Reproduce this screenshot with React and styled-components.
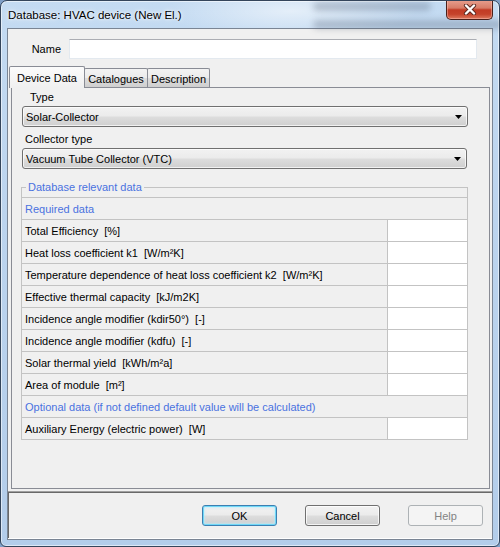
import React from 'react';
import styled, { createGlobalStyle } from 'styled-components';

const GlobalStyle = createGlobalStyle`
  html, body {
    margin: 0;
    padding: 0;
    background: #7f9fc7;
  }
  * {
    box-sizing: border-box;
  }
`;

const uiFont = `"Liberation Sans", Arial, sans-serif`;

const Window = styled.div`
  position: relative;
  width: 500px;
  height: 547px;
  display: flex;
  flex-direction: column;
  border: 1px solid #34455b;
  border-radius: 7px 7px 6px 6px;
  overflow: hidden;
  background:
    radial-gradient(ellipse 180px 40px at 290px 10px, rgba(255, 255, 255, 0.55), rgba(255, 255, 255, 0) 70%),
    linear-gradient(180deg, #c4dbf2 0%, #bcd4ee 40%, #b3cdea 100%);
  box-shadow: inset 0 0 0 1px rgba(255, 255, 255, 0.55);
  font-family: ${uiFont};
  font-size: 11px;
  color: #000;
`;

const TitleBar = styled.div`
  position: relative;
  height: 27px;
  display: flex;
  align-items: center;
  padding-left: 7px;
`;

const Smudge = styled.div`
  position: absolute;
  height: 9px;
  border-radius: 5px;
  background: rgba(70, 80, 100, 0.28);
  filter: blur(3px);
`;

const Title = styled.span`
  position: relative;
  font-family: ${uiFont};
  font-size: 11.5px;
  color: #000;
  text-shadow: 0 0 6px rgba(255, 255, 255, 0.9), 0 0 3px rgba(255, 255, 255, 0.9);
`;

const CloseButton = styled.div`
  position: absolute;
  top: -1px;
  right: 6px;
  width: 47px;
  height: 20px;
  display: flex;
  align-items: center;
  justify-content: center;
  border: 1px solid #4a201a;
  border-top: none;
  border-radius: 0 0 5px 5px;
  background: linear-gradient(180deg, #e8a08f 0%, #d77c67 42%, #c23b25 52%, #c5432b 75%, #de7a5f 100%);
  box-shadow: inset 0 0 0 1px rgba(255, 200, 190, 0.45);
`;

const Client = styled.div`
  flex: 1;
  margin: 0 6px 6px 6px;
  display: flex;
  flex-direction: column;
  background: #f0f0f0;
  border: 1px solid #7a8594;
`;

const MainSection = styled.div`
  flex: 1;
  display: flex;
  flex-direction: column;
`;

const NameRow = styled.div`
  display: flex;
  align-items: center;
  padding-top: 10px;
`;

const NameLabel = styled.span`
  width: 53px;
  text-align: right;
  margin-right: 8px;
`;

const TextBox = styled.div`
  width: 408px;
  height: 20px;
  background: #fff;
  border: 1px solid #e3e9ef;
  border-top-color: #abadb3;
`;

const TabStrip = styled.div`
  display: flex;
  align-items: flex-end;
  height: 22px;
  margin-top: 7px;
  margin-bottom: -1px;
  padding-left: 1px;
  position: relative;
  z-index: 1;
`;

const Tab = styled.div`
  display: flex;
  align-items: center;
  justify-content: center;
  width: ${(p) => p.$width}px;
  margin-left: ${(p) => (p.$active ? 0 : -1)}px;
  height: ${(p) => (p.$active ? 22 : 19)}px;
  margin-bottom: ${(p) => (p.$active ? 0 : 1)}px;
  border: 1px solid #898c95;
  border-bottom: none;
  border-radius: 2px 2px 0 0;
  padding-top: ${(p) => (p.$active ? 0 : 1)}px;
  z-index: ${(p) => (p.$active ? 2 : 1)};
  background: ${(p) =>
    p.$active
      ? 'linear-gradient(180deg, #fbfbfb 0%, #f0f0f0 100%)'
      : 'linear-gradient(180deg, #f3f3f3 0%, #ebebeb 50%, #dddddd 51%, #cfcfcf 100%)'};
`;

const TabPanel = styled.div`
  flex: 1;
  margin: 0 2px 2px 3px;
  border: 1px solid #898c95;
  background: #f0f0f0;
  display: flex;
  flex-direction: column;
`;

const FieldLabel = styled.div`
  height: 13px;
  line-height: 13px;
  margin-top: ${(p) => p.$top}px;
  padding-left: ${(p) => p.$indent}px;
`;

const ComboBox = styled.div`
  display: flex;
  align-items: center;
  justify-content: space-between;
  width: ${(p) => p.$width}px;
  height: 21px;
  margin: 2px 0 0 10px;
  padding: 0 5px 0 3px;
  border: 1px solid #707070;
  border-radius: 3px;
  background: linear-gradient(180deg, #f2f2f2 0%, #ebebeb 48%, #dddddd 52%, #cfcfcf 100%);
  box-shadow: inset 0 0 0 1px rgba(255, 255, 255, 0.7);
`;

const GroupBox = styled.div`
  display: flex;
  flex-direction: column;
  width: 447px;
  margin: 18px 0 0 9px;
  border: 1px solid #c3c3c3;
`;

const Legend = styled.span`
  align-self: flex-start;
  height: 13px;
  line-height: 13px;
  margin: -7px 0 0 4px;
  padding: 0 2px;
  background: #f0f0f0;
  color: #4a72e0;
`;

const DataGrid = styled.div`
  margin-top: 3px;
  display: flex;
  flex-direction: column;
`;

const Row = styled.div`
  display: grid;
  grid-template-columns: ${(p) => (p.$section ? '1fr' : '366px 79px')};
  height: 22px;
  border-top: 1px solid #c3c3c3;
`;

const LabelCell = styled.div`
  display: flex;
  align-items: center;
  padding-left: 3px;
  white-space: pre;
  color: ${(p) => (p.$section ? '#4a72e0' : '#000')};
  border-right: ${(p) => (p.$section ? 'none' : '1px solid #c3c3c3')};
`;

const ValueCell = styled.div`
  background: #fff;
`;

const ButtonBar = styled.div`
  height: 48px;
  display: flex;
  justify-content: flex-end;
  align-items: flex-start;
  gap: 28px;
  padding: 13px 9px 0 0;
  border-top: 1px solid #a0a0a0;
  border-bottom: 1px solid #fff;
  box-shadow: inset 1px 1px 0 #696969;
`;

const Button = styled.div`
  width: 75px;
  height: 21px;
  display: flex;
  align-items: center;
  justify-content: center;
  border-radius: 3px;
  border: 1px solid ${(p) => (p.$default ? '#3c7fb1' : p.$disabled ? '#adb2b5' : '#707070')};
  color: ${(p) => (p.$disabled ? '#838383' : '#000')};
  background: ${(p) =>
    p.$disabled
      ? '#f4f4f4'
      : 'linear-gradient(180deg, #f2f2f2 0%, #ebebeb 48%, #dddddd 52%, #cfcfcf 100%)'};
  box-shadow: ${(p) =>
    p.$default
      ? 'inset 0 0 0 1px #6fd8f8, inset 0 0 2px 2px rgba(180, 235, 252, 0.6)'
      : p.$disabled
      ? 'none'
      : 'inset 0 0 0 1px rgba(255,255,255,0.75)'};
`;

const rows = [
  { label: 'Required data', section: true },
  { label: 'Total Efficiency  [%]' },
  { label: 'Heat loss coefficient k1  [W/m²K]' },
  { label: 'Temperature dependence of heat loss coefficient k2  [W/m²K]' },
  { label: 'Effective thermal capacity  [kJ/m2K]' },
  { label: 'Incidence angle modifier (kdir50°)  [-]' },
  { label: 'Incidence angle modifier (kdfu)  [-]' },
  { label: 'Solar thermal yield  [kWh/m²a]' },
  { label: 'Area of module  [m²]' },
  { label: 'Optional data (if not defined default value will be calculated)', section: true },
  { label: 'Auxiliary Energy (electric power)  [W]' },
];

function DropArrow() {
  return (
    <svg width="7" height="4" viewBox="0 0 7 4">
      <path d="M0 0 H7 L3.5 4 Z" fill="#000" />
    </svg>
  );
}

function CloseGlyph() {
  return (
    <svg width="14" height="11" viewBox="0 0 14 11">
      <path d="M3 1.5 L11 9.5 M11 1.5 L3 9.5" stroke="#5b2820" strokeWidth="4.2" strokeLinecap="round" />
      <path d="M3 1.5 L11 9.5 M11 1.5 L3 9.5" stroke="#fff" strokeWidth="2.4" strokeLinecap="round" />
    </svg>
  );
}

export default function App() {
  return (
    <>
      <GlobalStyle />
      <Window>
        <TitleBar>
          <Smudge style={{ left: 312, top: 1, width: 118 }} />
          <Smudge style={{ left: 312, top: 19, width: 190 }} />
          <Title>Database: HVAC device (New El.)</Title>
        </TitleBar>
        <CloseButton>
          <CloseGlyph />
        </CloseButton>
        <Client>
          <MainSection>
            <NameRow>
              <NameLabel>Name</NameLabel>
              <TextBox />
            </NameRow>
            <TabStrip>
              <Tab $active $width={76}>Device Data</Tab>
              <Tab $width={64}>Catalogues</Tab>
              <Tab $width={63}>Description</Tab>
            </TabStrip>
            <TabPanel>
              <FieldLabel $top={3} $indent={18}>Type</FieldLabel>
              <ComboBox $width={446}>
                <span>Solar-Collector</span>
                <DropArrow />
              </ComboBox>
              <FieldLabel $top={6} $indent={13}>Collector type</FieldLabel>
              <ComboBox $width={445}>
                <span>Vacuum Tube Collector (VTC)</span>
                <DropArrow />
              </ComboBox>
              <GroupBox>
                <Legend>Database relevant data</Legend>
                <DataGrid>
                  {rows.map((r, i) => (
                    <Row key={i} $section={r.section}>
                      <LabelCell $section={r.section}>{r.label}</LabelCell>
                      {!r.section && <ValueCell />}
                    </Row>
                  ))}
                </DataGrid>
              </GroupBox>
            </TabPanel>
          </MainSection>
          <ButtonBar>
            <Button $default>OK</Button>
            <Button>Cancel</Button>
            <Button $disabled>Help</Button>
          </ButtonBar>
        </Client>
      </Window>
    </>
  );
}
